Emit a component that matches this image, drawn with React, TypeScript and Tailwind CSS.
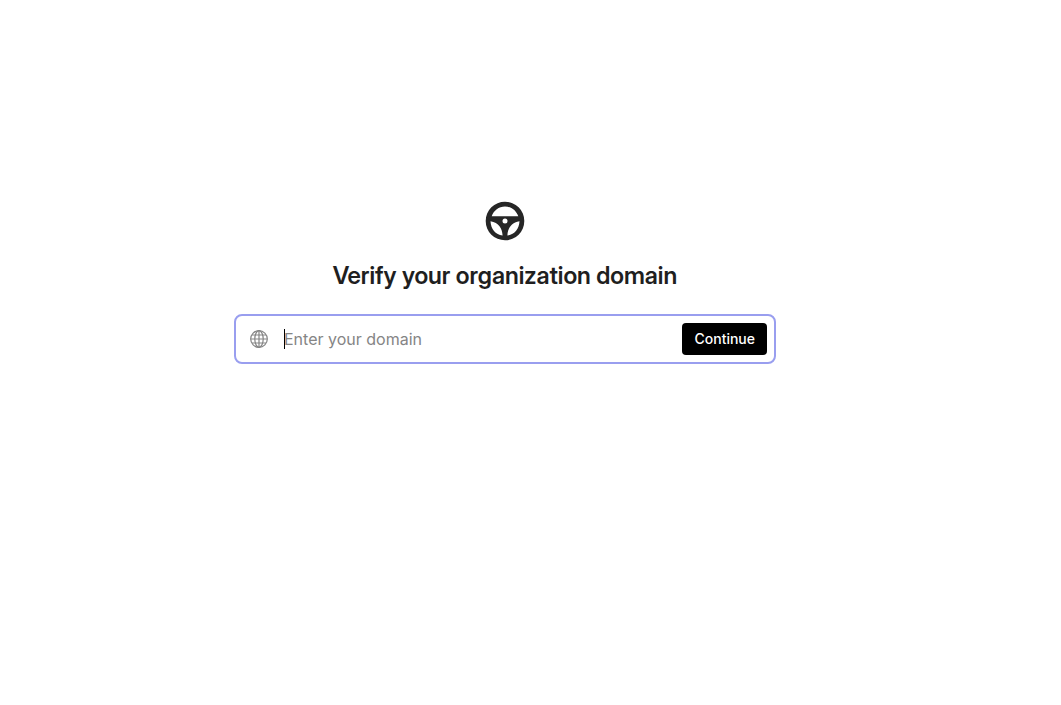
import { useState } from "react";

function WheelLogo() {
  return (
    <svg width="40" height="40" viewBox="0 0 40 40" fill="none" aria-hidden="true">
      <path
        fill="#262626"
        fillRule="evenodd"
        d="M20 .7a19.3 19.3 0 1 1 0 38.6A19.3 19.3 0 0 1 20 .7ZM6.7 15.3h26.6C31.3 9.6 26.2 5.5 20 5.5S8.7 9.6 6.7 15.3ZM5.5 20.2C5.900 28 10.5 33.5 17.6 34.5C17.3 27.2 13.8 21.6 5.5 20.2ZM34.5 20.2C26.2 21.6 22.7 27.2 22.4 34.5C29.5 33.5 34.1 28 34.5 20.2ZM20 17.5a2.5 2.5 0 1 0 0 5a2.5 2.5 0 0 0 0-5Z"
      />
    </svg>
  );
}

function GlobeIcon() {
  return (
    <svg width="18" height="18" viewBox="0 0 18 18" fill="none" stroke="#858585" strokeWidth="1.2" aria-hidden="true">
      <circle cx="9" cy="9" r="8.3" />
      <ellipse cx="9" cy="9" rx="4.2" ry="8.3" />
      <path d="M9 .7v16.6M.7 9h16.6M2 5h14M2 13h14" />
    </svg>
  );
}

export default function App() {
  const [domain, setDomain] = useState("");

  return (
    <main className="flex min-h-screen flex-col items-center bg-white pt-[201px] pr-[51px] font-['Inter',sans-serif]">
      <WheelLogo />
      <h1 className="mt-[19px] font-['Inter_Display','Inter',sans-serif] text-2xl font-semibold text-[#1f1f1f]">
        Verify your organization domain
      </h1>
      <form
        onSubmit={(event) => event.preventDefault()}
        className="mt-[22px] flex h-[50px] w-full max-w-[542px] items-center rounded-lg border-2 border-[#999eef] bg-white pr-[7px] pl-[14px]"
      >
        <label htmlFor="domain" className="shrink-0">
          <GlobeIcon />
        </label>
        <div className="relative ml-4 flex min-w-0 flex-1 items-center">
          <input
            id="domain"
            type="text"
            aria-label="Domain"
            value={domain}
            onChange={(event) => setDomain(event.target.value)}
            placeholder="Enter your domain"
            className="peer w-full bg-transparent text-base text-[#1f1f1f] outline-none placeholder:text-[#858585]"
          />
          <span className="pointer-events-none absolute left-0 hidden h-5 w-px bg-black peer-placeholder-shown:block peer-focus:hidden" />
        </div>
        <button type="submit" className="h-8 shrink-0 rounded bg-black px-3 text-sm font-medium text-white">
          Continue
        </button>
      </form>
    </main>
  );
}
